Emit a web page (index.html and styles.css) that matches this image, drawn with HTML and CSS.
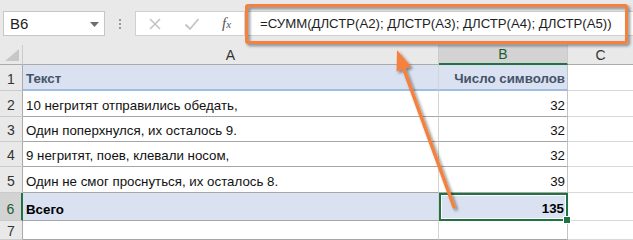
FILE: index.html
```html
<!DOCTYPE html>
<html lang="ru">
<head>
<meta charset="utf-8">
<link rel="stylesheet" href="styles.css">
</head>
<body>
<div class="app">
  <div class="toolbar">
    <div class="namebox">
      <span class="nb-text">B6</span>
      <svg class="nb-arrow" width="9" height="5" viewBox="0 0 9 5"><path d="M0 0H9L4.5 5Z" fill="#6d6d6d"/></svg>
    </div>
    <div class="dots"><i></i><i></i><i></i></div>
    <div class="fbar">
      <div class="fbtns">
        <svg class="fbtn" width="14" height="14" viewBox="0 0 14 14"><path d="M2 2L12 12M12 2L2 12" stroke="#c4c4c4" stroke-width="1.6"/></svg>
        <svg class="fbtn" width="16" height="14" viewBox="0 0 16 14"><path d="M1.5 7.5L6 12L14.5 2" stroke="#c4c4c4" stroke-width="1.8" fill="none"/></svg>
        <span class="fx">f<sub>x</sub></span>
      </div>
      <div class="ftext">=СУММ(ДЛСТР(A2); ДЛСТР(A3); ДЛСТР(A4); ДЛСТР(A5))</div>
    </div>
  </div>
  <div class="sheet">
    <div class="ch corner"><svg width="14" height="12" viewBox="0 0 14 12"><path d="M14 0V12H0Z" fill="#c7c7c7"/></svg></div>
    <div class="ch">A</div>
    <div class="ch ch-sel">B</div>
    <div class="ch chc">C</div>

    <div class="rh">1</div>
    <div class="c ca hdr">Текст</div>
    <div class="c cb hdr num">Число символов</div>
    <div class="c cc"></div>

    <div class="rh">2</div>
    <div class="c ca">10 негритят отправились обедать,</div>
    <div class="c cb num">32</div>
    <div class="c cc"></div>

    <div class="rh">3</div>
    <div class="c ca">Один поперхнулся, их осталось 9.</div>
    <div class="c cb num">32</div>
    <div class="c cc"></div>

    <div class="rh">4</div>
    <div class="c ca">9 негритят, поев, клевали носом,</div>
    <div class="c cb num">32</div>
    <div class="c cc"></div>

    <div class="rh">5</div>
    <div class="c ca">Один не смог проснуться, их осталось 8.</div>
    <div class="c cb num">39</div>
    <div class="c cc"></div>

    <div class="rh rh-sel">6</div>
    <div class="c ca tot">Всего</div>
    <div class="c cb tot num sel">135<span class="handle"></span></div>
    <div class="c cc"></div>

    <div class="rh rh-last">7</div>
    <div class="c ca"></div>
    <div class="c cb"></div>
    <div class="c cc"></div>
  </div>
  <svg class="overlay" width="633" height="240" viewBox="0 0 633 240">
    <defs>
      <filter id="sh" x="-20%" y="-20%" width="140%" height="140%">
        <feDropShadow dx="2" dy="2" stdDeviation="1.8" flood-color="#000" flood-opacity="0.45"/>
      </filter>
    </defs>
    <g filter="url(#sh)">
      <rect x="246.5" y="5.5" width="380" height="37" rx="1.5" fill="none" stroke="#f4813c" stroke-width="3"/>
      <line x1="454" y1="207" x2="402" y2="64" stroke="#f4813c" stroke-width="3.5" stroke-linecap="round"/>
      <path d="M397 50L411 66.5L396.5 71.5Z" fill="#f4813c"/>
    </g>
  </svg>
</div>
</body>
</html>
```

FILE: styles.css
```css
html, body {
  margin: 0;
  padding: 0;
  background: #ffffff;
}
.app {
  position: relative;
  width: 633px;
  height: 240px;
  overflow: hidden;
  background: #e9e9e9;
  font-family: "Liberation Sans", Arial, sans-serif;
}
.toolbar {
  height: 45px;
  box-sizing: border-box;
  padding: 11px 0 0 3px;
  display: flex;
  align-items: flex-start;
}
.namebox {
  flex-shrink: 0;
  width: 102px;
  height: 25px;
  box-sizing: border-box;
  background: #fff;
  border: 1px solid #c6c6c6;
  display: flex;
  align-items: center;
  justify-content: space-between;
  padding: 0 5px 0 6px;
  font-size: 15px;
  color: #222;
}
.nb-arrow { margin-top: 1px; }
.dots {
  flex-shrink: 0;
  width: 30px;
  height: 25px;
  display: flex;
  flex-direction: column;
  align-items: center;
  justify-content: center;
  gap: 2px;
}
.dots i {
  display: block;
  width: 2px;
  height: 2px;
  background: #9a9a9a;
}
.fbar {
  flex: 1;
  min-width: 0;
  height: 25px;
  display: flex;
  background: #fff;
  border: 1px solid #d0d0d0;
  border-right: none;
  box-sizing: border-box;
}
.fbtns {
  flex-shrink: 0;
  width: 109px;
  display: flex;
  align-items: center;
  box-sizing: border-box;
  padding-left: 12px;
  gap: 22px;
  border-right: 1px solid #d6d6d6;
}
.fx {
  font-family: "Liberation Serif", "Times New Roman", serif;
  font-style: italic;
  font-size: 15px;
  color: #555;
  margin-left: 0;
}
.fx sub {
  font-size: 11px;
  vertical-align: 0;
}
.ftext {
  min-width: 0;
  padding-left: 15px;
  line-height: 24px;
  font-size: 13.2px;
  color: #1e1e1e;
  white-space: nowrap;
}
.sheet {
  display: grid;
  grid-template-columns: 23px 416px 129px 65px;
  grid-template-rows: 20px 26px 26px 25px 25px 26px 28px 19px;
  font-size: 13.3px;
  color: #111;
}
.ch {
  background: #e9e9e9;
  border-right: 1px solid #cbcbcb;
  border-bottom: 1px solid #ababab;
  box-sizing: border-box;
  display: flex;
  align-items: center;
  justify-content: center;
  color: #333;
  font-size: 14px;
}
.corner {
  justify-content: flex-end;
  align-items: flex-end;
  padding: 0 3px 3px 0;
}
.ch-sel {
  background: #d3d3d3;
  border-bottom: 2px solid #217346;
  color: #1d5b36;
}
.chc { border-right: none; }
.rh {
  background: #e9e9e9;
  border-right: 1px solid #ababab;
  border-bottom: 1px solid #cbcbcb;
  box-sizing: border-box;
  display: flex;
  align-items: flex-end;
  justify-content: center;
  padding-bottom: 3px;
  color: #333;
  font-size: 14px;
}
.rh-last {
  align-items: flex-start;
  padding: 2px 0 0;
}
.rh-sel {
  background: #d3d3d3;
  border-right: 2px solid #217346;
  color: #1d5b36;
}
.c {
  background: #fff;
  box-sizing: border-box;
  border-bottom: 1px solid #a6a6a6;
  border-right: 1px solid #d4d4d4;
  display: flex;
  align-items: flex-end;
  padding: 0 3px 3px;
  white-space: nowrap;
}
.cb { border-right-color: #c4c4c4; padding-right: 2px; }
.cc { border-bottom-color: #d9d9d9; border-right: none; }
.num { justify-content: flex-end; }
.hdr {
  background: #dae1f1;
  border-bottom: 2px solid #9fbde0;
  font-weight: bold;
  color: #44546a;
}
.tot {
  background: #dae1f1;
  font-weight: bold;
  color: #000;
}
.sel {
  position: relative;
  border: 2px solid #217346;
  box-shadow: inset 0 0 0 1px #fff;
}
.handle {
  position: absolute;
  right: -5px;
  bottom: -5px;
  width: 6px;
  height: 6px;
  background: #217346;
  border: 1px solid #fff;
}
.overlay {
  position: absolute;
  left: 0;
  top: 0;
  pointer-events: none;
}
```
